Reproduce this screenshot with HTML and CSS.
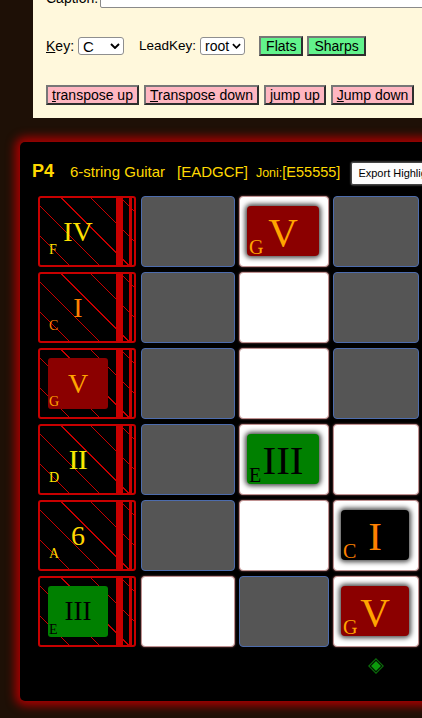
FILE: index.html
```html
<!DOCTYPE html>
<html>
<head>
<meta charset="utf-8">
<link rel="stylesheet" href="styles.css">
</head>
<body>
<div class="controls">
  <div class="caption-row">
    <span class="lbl cap-lbl">Caption:</span>
    <span class="text-input"></span>
  </div>
  <div class="key-row">
    <span class="lbl"><u>K</u>ey:</span>
    <span class="sel sel-key"><span>C</span><svg width="10" height="6" viewBox="0 0 10 6"><path d="M1 1l4 4 4-4" fill="none" stroke="#000" stroke-width="1.9"/></svg></span>
    <span class="lbl lead">LeadKey:</span>
    <span class="sel sel-lead"><span>root</span><svg width="9" height="6" viewBox="0 0 10 6"><path d="M1 1l4 4 4-4" fill="none" stroke="#000" stroke-width="1.9"/></svg></span>
    <span class="btn green flats">Flats</span>
    <span class="btn green">Sharps</span>
  </div>
  <div class="btn-row">
    <span class="btn pink"><u>t</u>ranspose up</span>
    <span class="btn pink"><u>T</u>ranspose down</span>
    <span class="btn pink"><u>j</u>ump up</span>
    <span class="btn pink"><u>J</u>ump down</span>
  </div>
</div>

<div class="board">
  <div class="head">
    <span class="pid">P4</span>
    <span class="title">6-string Guitar</span>
    <span class="tuning">[EADGCF]</span>
    <span class="joni"><span class="joni-lbl">Joni:</span>[E55555]</span>
    <span class="export">Export Highlights</span>
  </div>

  <div class="fretgrid">
    <!-- row 1 -->
    <div class="open"><div class="main"><span class="num c-yellow">IV</span><span class="note c-yellow">F</span></div><span class="bar-thick"></span><span class="bar-gap"></span><span class="bar-thin"></span></div>
    <div class="cell dark"></div>
    <div class="cell light has"><div class="tile t-red"><span class="num c-orange">V</span><span class="note c-orange">G</span></div></div>
    <div class="cell dark"></div>
    <div class="cell dark"></div>
    <!-- row 2 -->
    <div class="open"><div class="main"><span class="num c-dorange">I</span><span class="note c-dorange">C</span></div><span class="bar-thick"></span><span class="bar-gap"></span><span class="bar-thin"></span></div>
    <div class="cell dark"></div>
    <div class="cell light"></div>
    <div class="cell dark"></div>
    <div class="cell dark"></div>
    <!-- row 3 -->
    <div class="open"><div class="main"><span class="chip t-red"></span><span class="num c-orange">V</span><span class="note c-orange">G</span></div><span class="bar-thick"></span><span class="bar-gap"></span><span class="bar-thin"></span></div>
    <div class="cell dark"></div>
    <div class="cell light"></div>
    <div class="cell dark"></div>
    <div class="cell dark"></div>
    <!-- row 4 -->
    <div class="open"><div class="main"><span class="num c-yellow2 ii">II</span><span class="note c-yellow2">D</span></div><span class="bar-thick"></span><span class="bar-gap"></span><span class="bar-thin"></span></div>
    <div class="cell dark"></div>
    <div class="cell light has"><div class="tile t-green"><span class="num c-black">III</span><span class="note c-black">E</span></div></div>
    <div class="cell light"></div>
    <div class="cell dark"></div>
    <!-- row 5 -->
    <div class="open"><div class="main"><span class="num c-gold">6</span><span class="note c-gold">A</span></div><span class="bar-thick"></span><span class="bar-gap"></span><span class="bar-thin"></span></div>
    <div class="cell dark"></div>
    <div class="cell light"></div>
    <div class="cell light has"><div class="tile t-black"><span class="num c-dorange">I</span><span class="note c-dorange">C</span></div></div>
    <div class="cell dark"></div>
    <!-- row 6 -->
    <div class="open"><div class="main"><span class="chip t-green"></span><span class="num c-black small-iii">III</span><span class="note c-black">E</span></div><span class="bar-thick"></span><span class="bar-gap"></span><span class="bar-thin"></span></div>
    <div class="cell light"></div>
    <div class="cell dark"></div>
    <div class="cell light has"><div class="tile t-red"><span class="num c-orange">V</span><span class="note c-orange">G</span></div></div>
    <div class="cell dark"></div>
  </div>

  <div class="markers">
    <svg class="diamond" width="16" height="16" viewBox="0 0 16 16"><polygon points="8,0.8 15.2,8 8,15.2 0.8,8" fill="none" stroke="#0b6b0b" stroke-width="1.2"/><polygon points="8,3 13,8 8,13 3,8" fill="#0c9a0c"/></svg>
  </div>
</div>
</body>
</html>
```
FILE: styles.css
```css
html, body {
  margin: 0;
  padding: 0;
  overflow: hidden;
}
body {
  width: 422px;
  height: 718px;
  background: #1e1006;
  font-family: "Liberation Sans", Arial, sans-serif;
  color: #000;
}

/* ---------- control panel ---------- */
.controls {
  margin: -20px 0 0 33px;
  width: 620px;
  background: #fff8dc;
  padding: 8px 0 13px 13px;
  box-sizing: border-box;
}
.caption-row {
  display: flex;
  align-items: center;
  height: 20px;
}
.lbl {
  font-size: 14px;
  line-height: 16px;
}
.cap-lbl {
  flex: 0 0 54px;
}
.text-input {
  width: 540px;
  height: 20px;
  box-sizing: border-box;
  background: #fff;
  border: 1px solid #8a8a8a;
  border-radius: 2px;
}
.key-row {
  margin-top: 28px;
  display: flex;
  align-items: center;
  height: 20px;
}
.sel {
  display: flex;
  align-items: center;
  justify-content: space-between;
  height: 18px;
  box-sizing: border-box;
  background: #fff;
  border: 1px solid #8f8f8f;
  border-radius: 3px;
  font-size: 15px;
  padding: 0 3px 0 4px;
  margin-left: 4px;
}
.sel-key { width: 46px; }
.sel-lead { width: 45px; font-size: 14px; }
.lead { margin-left: 15px; font-size: 13.5px; }
.flats { margin-left: 14px; }
.btn {
  display: inline-block;
  font-size: 14px;
  line-height: 16px;
  padding: 0 4px;
  border: 2px solid;
  border-color: #777 #2e2e2e #2e2e2e #777;
  color: #000;
}
.green {
  background: #62f38c;
  padding: 0 5px;
  margin-right: 4px;
}
.pink {
  background: #ffb6c1;
}
.btn-row {
  margin-top: 29px;
  display: flex;
  gap: 5px;
}

/* ---------- board ---------- */
.board {
  margin: 24px 0 0 20px;
  width: 640px;
  height: 559px;
  box-sizing: border-box;
  background: #000;
  border-radius: 5px;
  box-shadow: 0 0 10px 5px #a50000;
  padding: 19px 0 0 12px;
}
.head {
  display: flex;
  align-items: baseline;
  color: #ffd800;
  white-space: nowrap;
}
.pid {
  font-weight: bold;
  font-size: 18px;
}
.title {
  font-size: 15px;
  margin-left: 16px;
}
.tuning {
  font-size: 15px;
  margin-left: 12px;
}
.joni {
  font-size: 14.5px;
  margin-left: 8px;
}
.joni-lbl {
  font-size: 12.5px;
}
.export {
  margin-left: 11px;
  font-size: 11px;
  line-height: 13px;
  padding: 4px 6px;
  background: #fcfcfc;
  color: #000;
  border: 1px solid #444;
  border-radius: 2px;
  box-shadow: 0 0 2px #999;
}

.fretgrid {
  margin: 11px 0 0 6px;
  display: grid;
  grid-template-columns: 99px 94px 90px 86px 84px;
  grid-auto-rows: 71px;
  column-gap: 4px;
  row-gap: 5px;
}

/* open-string column */
.open {
  width: 98px;
  box-sizing: border-box;
  border: 2px solid #c80000;
  border-radius: 3px;
  background-color: #000;
  background-image: repeating-linear-gradient(45deg, transparent 0 20.2px, #c80000 20.2px 21px);
  display: flex;
}
.open .main {
  flex: 0 0 76px;
  display: grid;
}
.bar-thick {
  flex: 0 0 7px;
  background: #c80000;
}
.bar-gap {
  flex: 0 0 6px;
}
.bar-thin {
  flex: 0 0 3px;
  background: #c80000;
}
.main .chip {
  grid-area: 1 / 1;
  margin: 8px;
  border-radius: 3px;
}
.main .num {
  grid-area: 1 / 1;
  place-self: center;
  font-family: "Liberation Serif", "Times New Roman", serif;
  font-size: 28px;
  line-height: 1;
}
.main .note {
  grid-area: 1 / 1;
  align-self: end;
  justify-self: start;
  margin: 0 0 8px 9px;
  font-family: "Liberation Serif", "Times New Roman", serif;
  font-size: 14px;
  line-height: 1;
}
.main .small-iii {
  font-size: 27px;
}
.ii {
  text-shadow: 1px 0 0 rgba(40, 130, 0, 0.8);
}

/* fret cells */
.cell {
  box-sizing: border-box;
  border: 1px solid;
  border-radius: 4px;
}
.dark {
  background: #555;
  border-color: #4d6cad;
}
.light {
  background: #fff;
  border-color: #c09292;
  box-shadow: 0 0 2px rgba(190, 110, 110, 0.8);
}
.has {
  display: flex;
  padding: 9px 9px 10px 7px;
}
.tile {
  flex: 1;
  display: grid;
  border-radius: 4px;
  box-shadow: 0 0 5px 2px rgba(0, 0, 0, 0.72);
}
.tile .num {
  grid-area: 1 / 1;
  place-self: center;
  font-family: "Liberation Serif", "Times New Roman", serif;
  font-size: 41px;
  line-height: 1;
  margin-top: 3px;
}
.tile .note {
  grid-area: 1 / 1;
  align-self: end;
  justify-self: start;
  margin: 0 0 -1px 2px;
  font-family: "Liberation Serif", "Times New Roman", serif;
  font-size: 20px;
  line-height: 1;
}

/* colours */
.t-red { background: #8b0000; }
.t-green { background: #008000; }
.t-black { background: #000; }
.c-yellow { color: #ffe000; }
.c-yellow2 { color: #ffe800; }
.c-gold { color: #ffd700; }
.c-orange { color: #ffa500; }
.c-dorange { color: #ff8000; }
.c-black { color: #000; }

.markers {
  margin: 11px 0 0 6px;
  display: grid;
  grid-template-columns: 99px 94px 90px 86px;
  column-gap: 4px;
}
.diamond {
  grid-column: 4;
  justify-self: center;
  display: block;
}
```
